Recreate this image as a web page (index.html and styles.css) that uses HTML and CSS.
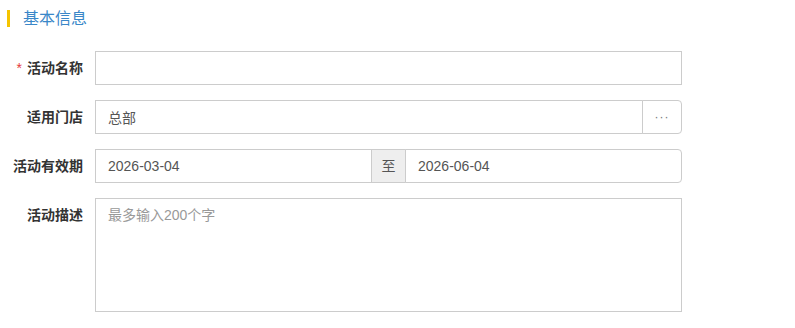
FILE: index.html
```html
<!DOCTYPE html>
<html lang="zh-CN">
<head>
  <meta charset="UTF-8">
  <title>基本信息</title>
  <link rel="stylesheet" href="styles.css">
</head>
<body>

  <div class="panel">
    <h2 class="panel-title">基本信息</h2>

    <form class="form">
      <div class="form-row">
        <label class="form-label required" for="name">活动名称</label>
        <input class="input" id="name" type="text">
      </div>

      <div class="form-row">
        <label class="form-label" for="store">适用门店</label>
        <div class="input-group">
          <input class="input" id="store" type="text" value="总部">
          <span class="addon addon-more">···</span>
        </div>
      </div>

      <div class="form-row">
        <label class="form-label" for="start">活动有效期</label>
        <div class="input-group">
          <input class="input" id="start" type="text" value="2026-03-04">
          <span class="addon">至</span>
          <input class="input" id="end" type="text" value="2026-06-04">
        </div>
      </div>

      <div class="form-row">
        <label class="form-label" for="desc">活动描述</label>
        <textarea class="input textarea" id="desc" placeholder="最多输入200个字"></textarea>
      </div>
    </form>
  </div>

</body>
</html>
```

FILE: styles.css
```css
body {
  margin: 0;
  background: #fff;
  font-family: "Liberation Sans", "Noto Sans CJK SC", sans-serif;
  color: #333;
}

.panel {
  padding: 10px 0 0 7px;
}

.panel-title {
  margin: 0;
  padding-left: 13px;
  border-left: 3px solid #f5c400;
  height: 17px;
  line-height: 17px;
  font-size: 16px;
  font-weight: normal;
  color: #3a87c8;
}

.form {
  display: flex;
  flex-direction: column;
  gap: 15px;
  margin-top: 24px;
}

.form-row {
  display: grid;
  grid-template-columns: 76px 587px;
  column-gap: 12px;
  align-items: start;
}

.form-label {
  text-align: right;
  font-size: 14px;
  font-weight: bold;
  line-height: 34px;
  color: #333;
  white-space: nowrap;
}

.form-label.required::before {
  content: "*";
  color: #e4393c;
  margin-right: 5px;
  font-weight: normal;
}

.input {
  box-sizing: border-box;
  width: 100%;
  height: 34px;
  margin: 0;
  padding: 0 12px;
  border: 1px solid #ccc;
  border-radius: 0;
  background: #fff;
  font-family: inherit;
  font-size: 14px;
  color: #555;
  outline: none;
}

.textarea {
  height: 114px;
  padding: 6px 12px;
  resize: none;
  line-height: 20px;
}

.textarea::placeholder {
  color: #999;
}

.input-group {
  display: flex;
}

.input-group .input {
  flex: 1 1 0;
  min-width: 0;
}

.input-group > * + * {
  margin-left: -1px;
}

.input-group > :last-child {
  border-top-right-radius: 4px;
  border-bottom-right-radius: 4px;
}

.addon {
  box-sizing: border-box;
  height: 34px;
  width: 35px;
  flex: none;
  border: 1px solid #ccc;
  background: #eee;
  text-align: center;
  line-height: 32px;
  font-size: 14px;
  color: #555;
}

.addon-more {
  width: 40px;
  background: #fff;
  font-size: 12px;
  color: #777;
  letter-spacing: 1px;
}
```
